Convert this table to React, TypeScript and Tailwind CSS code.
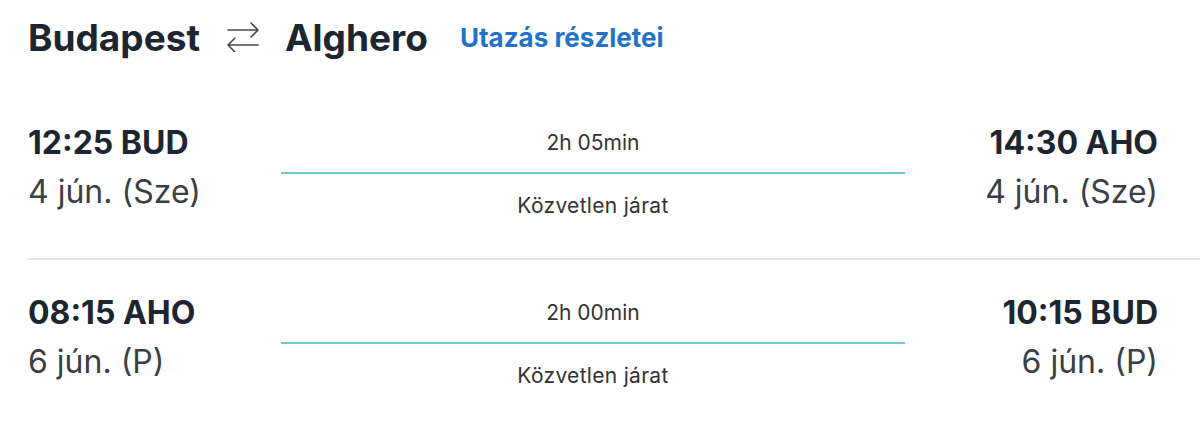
type Leg = {
  depTime: string
  depCode: string
  depDate: string
  arrTime: string
  arrCode: string
  arrDate: string
  duration: string
}

const legs: Leg[] = [
  {
    depTime: '12:25',
    depCode: 'BUD',
    depDate: '4 jún. (Sze)',
    arrTime: '14:30',
    arrCode: 'AHO',
    arrDate: '4 jún. (Sze)',
    duration: '2h 05min',
  },
  {
    depTime: '08:15',
    depCode: 'AHO',
    depDate: '6 jún. (P)',
    arrTime: '10:15',
    arrCode: 'BUD',
    arrDate: '6 jún. (P)',
    duration: '2h 00min',
  },
]

// two-way arrows between the city names
function SwapArrows() {
  return (
    <svg width="32" height="30" viewBox="0 0 32 30" fill="none" stroke="#44494f" strokeWidth="1.6" strokeLinecap="round" strokeLinejoin="round">
      <path d="M1 8h30M24 1l7 7-7 7" />
      <path d="M31 23H1M8 16l-7 7 7 7" />
    </svg>
  )
}

function LegRow({ leg }: { leg: Leg }) {
  return (
    <div className="grid grid-cols-[253px_1fr_253px] items-start pr-[42px]">
      <div>
        <div className="text-[32px] font-bold leading-[40px] text-[#1d2630]">
          {leg.depTime} {leg.depCode}
        </div>
        <div className="text-[32px] leading-[58px] text-[#3a3f45]">{leg.depDate}</div>
      </div>
      <div className="flex flex-col items-center pt-[6px]">
        <div className="text-[21px] leading-[28px] text-[#333]">{leg.duration}</div>
        <div className="w-full h-[2px] bg-[#6dcad6] mt-[15px]" />
        <div className="text-[21px] leading-[28px] tracking-[0.3px] text-[#333] mt-[18px]">Közvetlen járat</div>
      </div>
      <div className="text-right">
        <div className="text-[32px] font-bold leading-[40px] text-[#1d2630]">
          {leg.arrTime} {leg.arrCode}
        </div>
        <div className="text-[32px] leading-[58px] text-[#3a3f45]">{leg.arrDate}</div>
      </div>
    </div>
  )
}

export default function App() {
  return (
    <div className="w-[1200px] h-[424px] bg-white pl-[28px] font-['Inter',sans-serif] overflow-hidden">
      {/* Route header */}
      <div className="flex items-center pt-[15px] h-[60px]">
        <span className="text-[37px] font-bold text-[#1d2630]">Budapest</span>
        <span className="ml-[27px] mr-[26px] -mt-[2px]">
          <SwapArrows />
        </span>
        <span className="text-[37px] font-bold text-[#1d2630]">Alghero</span>
        <a className="ml-[32px] text-[26px] font-bold text-[#2272c9]">Utazás részletei</a>
      </div>

      <div className="pt-[63px]">
        <LegRow leg={legs[0]} />
      </div>
      <div className="h-[2px] bg-[#e6e6e6] mt-[37px]" />
      <div className="pt-[33px]">
        <LegRow leg={legs[1]} />
      </div>
    </div>
  )
}
